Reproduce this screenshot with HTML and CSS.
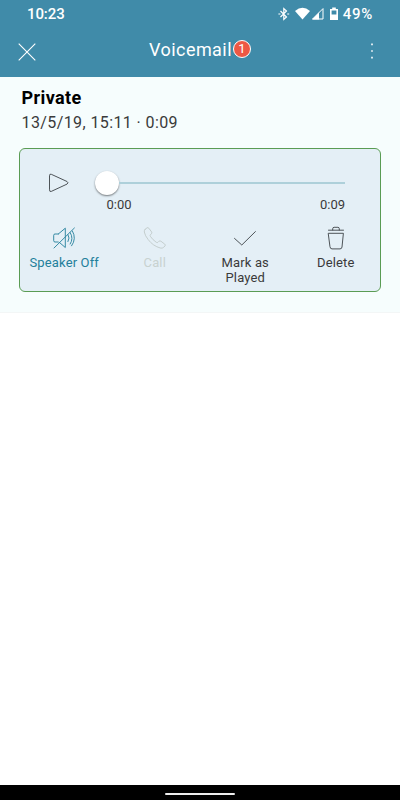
FILE: index.html
```html
<!DOCTYPE html>
<html lang="en">
  <head>
    <meta charset="UTF-8" />
    <meta name="viewport" content="width=device-width, initial-scale=1.0" />
    <title>Voicemail</title>
    <link rel="stylesheet" href="styles.css">
  </head>
  <body>
    <header>
      <!-- Status bar -->
      <div class="status-bar">
        <span class="clock">10:23</span>
        <div class="status-icons">
          <svg class="bluetooth" width="12" height="14" viewBox="0 0 12 14">
            <path d="M2.5 4 L8.5 10 L5.8 12.5 V1.5 L8.5 4 L2.5 10" />
            <path d="M.4 7h2M9.2 7h2" />
          </svg>
          <svg class="wifi" width="15" height="14" viewBox="0 0 15 14">
            <path d="M0 4Q7.5-2.4 15 4L7.5 12.5Z" />
          </svg>
          <svg class="signal" width="13" height="14" viewBox="0 0 13 14">
            <path class="outline" d="M1.6 12H12V1.6Z" />
            <path d="M1 12.5H8V5.5Z" />
          </svg>
          <svg class="battery" width="8" height="14" viewBox="0 0 8 14">
            <path d="M2.2 0.5h3.6v1.5H8V13H0V2h2.2zM1.6 3.5v4h4.8V3.5z" fill-rule="evenodd" />
          </svg>
          <span class="percent">49%</span>
        </div>
      </div>
      <!-- Title bar -->
      <div class="title-bar">
        <svg class="close" width="18" height="18" viewBox="0 0 18 18">
          <path d="M.7.7l16.6 16.6M17.3.7L.7 17.3" />
        </svg>
        <div class="title">
          <h1>Voicemail</h1>
          <span class="badge">1</span>
        </div>
        <svg class="more" width="4" height="18" viewBox="0 0 4 18">
          <path d="M1.2 1.6h1.6v1.6H1.2zM1.2 8.2h1.6v1.6H1.2zM1.2 14.8h1.6v1.6H1.2z" />
        </svg>
      </div>
    </header>

    <main>
      <section class="voicemail">
        <h2>Private</h2>
        <p class="details">13/5/19, 15:11 · 0:09</p>

        <div class="player">
          <div class="playback">
            <svg class="icon" width="22" height="20" viewBox="0 0 22 20">
              <path d="M1.5 2.4Q1.5.5 3.3 1.3L19 8.5Q21 9.8 19 11.1L3.3 18.4Q1.5 19.1 1.5 17.2Z" />
            </svg>
            <div class="slider">
              <div class="thumb"></div>
              <div class="track"></div>
            </div>
          </div>
          <div class="times">
            <span>0:00</span>
            <span>0:09</span>
          </div>

          <div class="actions">
            <div class="action active">
              <svg class="icon" width="24" height="24" viewBox="0 0 24 24">
                <path d="M6.3 8H3Q1.7 8 1.7 9.3v5.4q0 1.3 1.3 1.3h3.3M6.3 8L13.3 2.2V21.5L7.6 16.6" />
                <path d="M2 22L22.4 2M16 8.6q2.2 3.4 0 7M18.2 6.6q3.6 5.8 0 11.4M20.4 5q4.4 7.6-.8 14.8" />
              </svg>
              <span>Speaker Off</span>
            </div>
            <div class="action disabled">
              <svg class="icon" width="24" height="24" viewBox="0 0 24 24">
                <path d="M2 3.5L4 1.8Q5 1.2 5.8 2.2L8.6 5.9Q9.3 6.9 8.4 7.8L7.3 8.9Q6.8 9.5 7.4 10.4Q9.8 13.9 13.3 16.3Q14.2 16.9 14.9 16.3L15.9 15.3Q16.9 14.5 17.9 15.2L21.7 18.1Q22.8 18.9 22 19.9L20.7 21.3Q19.4 22.6 17.3 22Q10 20 5.2 13.6Q2 9.7 1.3 6Q1 4.5 2 3.5Z" />
              </svg>
              <span>Call</span>
            </div>
            <div class="action">
              <svg class="icon" width="24" height="24" viewBox="0 0 24 24">
                <path d="M1.5 12.4L8.8 19 22.4 5.6" />
              </svg>
              <span>Mark as<br>Played</span>
            </div>
            <div class="action">
              <svg class="icon" width="24" height="24" viewBox="0 0 24 24">
                <path d="M4.5 4.2h15M8.7 4V2.8q0-1.5 1.4-1.5h3.8q1.4 0 1.4 1.5V4" />
                <path d="M4.6 7.3h14.8L18 21q-.2 1.9-2 1.9H8q-1.8 0-2-1.9Z" />
              </svg>
              <span>Delete</span>
            </div>
          </div>
        </div>
      </section>
    </main>

    <!-- System navigation -->
    <footer>
      <div class="home-handle"></div>
    </footer>
  </body>
</html>
```

FILE: styles.css
```css
* {
  box-sizing: border-box;
}

body {
  font-family: Roboto, "Liberation Sans", sans-serif;
  display: flex;
  flex-direction: column;
  height: 100vh;
  margin: 0;
  background-color: #fff;
  color: #3a3a3a;
}

h1,
h2,
p {
  margin: 0;
}

svg {
  display: block;
  flex-shrink: 0;
}

/* Header */
header {
  height: 77px;
  background-color: #408ba9;
  color: #fff;
}

.status-bar {
  display: flex;
  justify-content: space-between;
  height: 28px;
  padding: 0 27px;
  align-items: center;
}

.clock,
.percent {
  font-size: 15px;
  font-weight: 500;
  line-height: 29px;
}

.clock {
  letter-spacing: -0.1px;
}

.percent {
  letter-spacing: 0.7px;
}

.status-icons {
  display: flex;
  align-items: center;
  fill: #fff;
}

.bluetooth {
  margin-right: 5px;
  fill: none;
  stroke: #fff;
  stroke-width: 1.2;
}

.wifi {
  margin-right: 1px;
}

.signal {
  margin-right: 6px;
}

.signal .outline {
  fill: none;
  stroke: #fff;
}

.battery {
  margin-right: 5px;
}

.title-bar {
  display: flex;
  justify-content: space-between;
  align-items: center;
  height: 46px;
  padding: 0 26px 0 18px;
}

.close {
  margin-top: 1px;
  fill: none;
  stroke: #fff;
  stroke-width: 1.1;
}

.title {
  display: flex;
  align-items: center;
  margin-right: 6px;
}

.title h1 {
  font-size: 18px;
  font-weight: 400;
  line-height: 24px;
  letter-spacing: 0.45px;
  margin-top: -2px;
}

.badge {
  width: 18px;
  height: 18px;
  margin: -5px 0 0 1px;
  border: 1px solid #fff;
  border-radius: 50%;
  background-color: #ed5844;
  font-size: 13px;
  line-height: 16px;
  text-align: center;
}

.more {
  fill: #fff;
}

/* Voicemail entry */
main {
  flex: 1;
}

.voicemail {
  height: 236px;
  padding: 10px 19px 0;
  background-color: #f6fdfd;
  border-bottom: 1px solid #f3f6f6;
}

.voicemail h2 {
  padding-left: 2.5px;
  font-size: 18px;
  font-weight: 700;
  line-height: 22px;
  letter-spacing: 0.4px;
  color: #000;
}

.details {
  padding-left: 2.5px;
  margin-top: 2px;
  font-size: 16px;
  line-height: 23px;
  letter-spacing: 0.4px;
}

/* Player */
.player {
  height: 144px;
  margin-top: 14px;
  border: 1px solid #5a9c54;
  border-radius: 6px;
  background-color: #e4eff6;
}

.icon {
  fill: none;
  stroke: #3c4246;
  stroke-width: 0.9;
  stroke-linejoin: round;
  stroke-linecap: round;
}

.playback {
  display: flex;
  align-items: center;
  height: 46px;
  padding: 22px 35px 0 28px;
}

.slider {
  display: flex;
  flex: 1;
  align-items: center;
  margin-left: 25px;
}

.thumb {
  width: 24px;
  height: 24px;
  border-radius: 50%;
  background-color: #fff;
  box-shadow: 0 1px 2px rgba(0, 0, 0, 0.5);
}

.track {
  flex: 1;
  height: 2px;
  background-color: #aed0da;
}

.times {
  display: flex;
  justify-content: space-between;
  margin-top: 1px;
  padding: 0 35px 0 86.5px;
  font-size: 13px;
  line-height: 18px;
}

.actions {
  display: grid;
  grid-template-columns: repeat(4, 1fr);
  margin: 12px -1px 0;
}

.action {
  display: flex;
  flex-direction: column;
  align-items: center;
  font-size: 13px;
  line-height: 15px;
  letter-spacing: 0.15px;
  text-align: center;
  white-space: nowrap;
}

.action span {
  margin-top: 5px;
}

.active {
  color: #237f9b;
}

.active .icon {
  stroke: #237f9b;
}

.disabled {
  color: #c8d2d0;
}

.disabled .icon {
  stroke: #bfcac8;
}

/* System navigation */
footer {
  display: flex;
  justify-content: center;
  align-items: center;
  height: 15px;
  padding-top: 2px;
  background-color: #000;
}

.home-handle {
  width: 70px;
  height: 2px;
  border-radius: 1px;
  background-color: #eee;
}
```
